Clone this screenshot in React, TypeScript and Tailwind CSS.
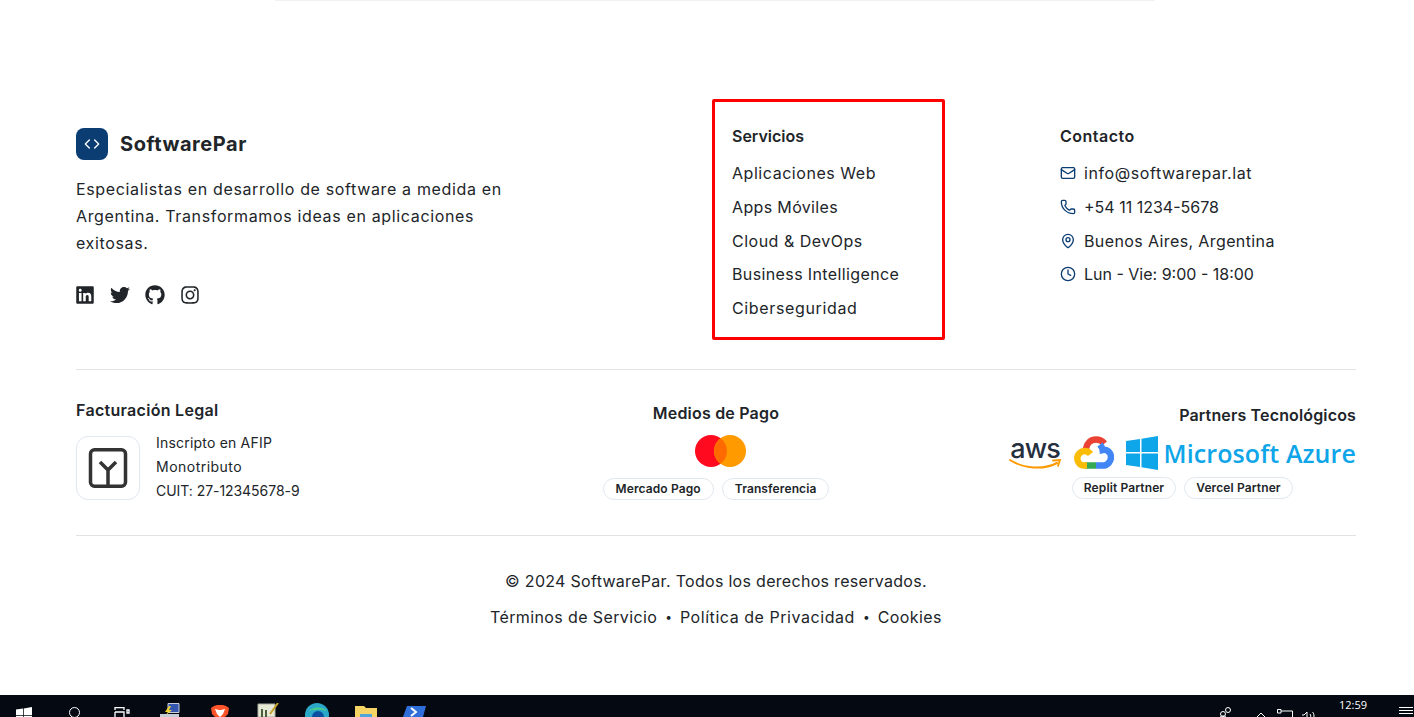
import { Clock, Code, Mail, MapPin, Phone } from "lucide-react";
import { FaGithub, FaInstagram, FaLinkedin, FaTwitter } from "react-icons/fa";

const services = [
  { label: "Aplicaciones Web", track: "tracking-[0.55px]" },
  { label: "Apps Móviles", track: "tracking-[0.35px]" },
  { label: "Cloud & DevOps", track: "tracking-[0.5px]" },
  { label: "Business Intelligence", track: "tracking-[0.38px]" },
  { label: "Ciberseguridad", track: "tracking-[0.64px]" },
];

const contact = [
  { icon: Mail, text: "info@softwarepar.lat", track: "tracking-[0.58px]" },
  { icon: Phone, text: "+54 11 1234-5678", track: "tracking-[0px]" },
  { icon: MapPin, text: "Buenos Aires, Argentina", track: "tracking-[0.39px]" },
  { icon: Clock, text: "Lun - Vie: 9:00 - 18:00", track: "tracking-[0px]" },
];

const Chip = ({ label, wide }: { label: string; wide?: boolean }) => (
  <span
    className={`h-[22px] flex items-center rounded-full border border-[#e2e8f0] text-[12px] font-semibold tracking-[0.01em] text-[#212529] ${
      wide ? "px-3" : "px-[11px]"
    }`}
  >
    {label}
  </span>
);

const WindowsLogo = ({ className, fill }: { className: string; fill: string }) => (
  <svg viewBox="0 0 32 34" className={className} fill={fill}>
    <path d="M0 5l14-2v13H0zM15.500 2.800L32 0v16H15.500zM0 17.500h14v13.500L0 29zM15.500 17.500H32V34l-16.500-2.700z" />
  </svg>
);

// cloud logo, four coloured segments
const GoogleCloud = () => (
  <svg viewBox="0 0 40 33" className="w-10 h-[33px]" fill="none" strokeWidth="6.500">
    <path d="M12 12.500C13 7 17 3.500 22 3.500c3.500 0 6.500 1.500 8.500 4" stroke="#ea4335" />
    <path d="M26 8.500c1.500 2 2.500 3.500 2.700 5.500 4-.8 8.300 2 8.300 7 0 4.500-3.500 8.500-8 8.500h-7" stroke="#4285f4" />
    <path d="M22 29.500H11" stroke="#34a853" />
    <path d="M13 29.500h-3C6 29.500 3.300 26 3.300 22.500 3.300 18 7 15 10.500 15c2.500 0 4.500 1 6 3" stroke="#fbbc05" />
  </svg>
);

const AwsLogo = () => (
  <div className="w-[53px] h-[34px] relative flex justify-center">
    <span className="text-[27px] leading-[25px] font-medium tracking-[-0.03em] text-[#252f3e]">aws</span>
    <svg viewBox="0 0 53 12" className="absolute left-0 bottom-0 w-[53px] h-3" fill="none">
      <path d="M1 2c14 9 34 10 47 3" stroke="#f90" strokeWidth="2" strokeLinecap="round" />
      <path d="M44 2.500l7-.5-2 6" stroke="#f90" strokeWidth="1.800" strokeLinecap="round" />
    </svg>
  </div>
);

const Taskbar = () => (
  <div className="h-[22px] shrink-0 bg-[#050a12] overflow-hidden flex items-start">
    <div className="flex">
      <div className="w-12 pt-3 flex justify-center">
        <WindowsLogo className="w-4 h-[17px]" fill="#ffffff" />
      </div>
      <div className="w-[52px] pt-3 flex justify-center">
        <div className="w-[11px] h-[11px] rounded-full border-[1.5px] border-white" />
      </div>
      <div className="w-11 pt-3 flex justify-center">
        <svg viewBox="0 0 16 12" className="w-4 h-3" fill="none" stroke="#fff" strokeWidth="1.300">
          <path d="M1 3V.7h9V3M1 5h9v7M1 5v7M13 3h2v3h-2z" />
        </svg>
      </div>
      <div className="w-[52px] pt-2 flex justify-center">
        <svg viewBox="0 0 20 14" className="w-5 h-[14px]">
          <path d="M8 .5h11v9H8z" fill="#3557b0" stroke="#c8d0e0" />
          <path d="M9 3L5 9h3l-3 4 7-6H9l2-4z" fill="#f2d22e" />
          <path d="M0 11h19v3H0z" fill="#c5ccd8" />
        </svg>
      </div>
      <div className="w-12 pt-[10px] flex justify-center">
        <svg viewBox="0 0 20 12" className="w-5 h-3">
          <path d="M4 1l3-1h6l3 1 3 2-1 6-3 3H5L2 9 1 3z" fill="#fb542b" />
          <path d="M5 4l4 1h2l4-1-2 5-3 3-3-3z" fill="#fff" />
        </svg>
      </div>
      <div className="w-12 pt-2 flex justify-center">
        <svg viewBox="0 0 22 14" className="w-[22px] h-[14px]">
          <path d="M1 1h17v13H1z" fill="#e8ead8" stroke="#a9ad98" />
          <path d="M5 6v8M9 7v7" stroke="#4b5f3a" strokeWidth="2" />
          <path d="M13 11L21 0" stroke="#c7a02c" strokeWidth="2" />
        </svg>
      </div>
      <div className="w-[50px] pt-2 flex justify-center">
        <svg viewBox="0 0 24 14" className="w-6 h-[14px]">
          <circle cx="12" cy="12" r="12" fill="#2aa7c9" />
          <circle cx="13" cy="14" r="6" fill="#0b4f9e" />
          <path d="M4 8c4-4 12-5 18 0-6-2-12-2-18 0z" fill="#4bd08a" />
        </svg>
      </div>
      <div className="w-12 pt-[11px] flex justify-center">
        <svg viewBox="0 0 22 11" className="w-[22px] h-[11px]">
          <path d="M0 0h9l2 2h11v9H0z" fill="#f6d365" />
          <path d="M5 8h12v3H5z" fill="#4ea5dc" />
        </svg>
      </div>
      <div className="w-12 pt-[11px] flex justify-center">
        <svg viewBox="0 0 23 11" className="w-[23px] h-[11px]">
          <path d="M4 0h19l-3 11H0z" fill="#2f6fdb" />
          <path d="M8 2l5 4-5 4" stroke="#fff" strokeWidth="2" fill="none" />
        </svg>
      </div>
    </div>
    <div className="ml-auto flex items-start">
      <svg viewBox="0 0 14 12" className="w-[14px] h-3 mt-3 mr-[22px]" fill="none" stroke="#fff">
        <circle cx="9" cy="3" r="2.500" />
        <circle cx="4" cy="7" r="2.500" />
        <path d="M0 12c0-2 2-3 4-3s4 1 4 3" />
      </svg>
      <svg viewBox="0 0 12 7" className="w-3 h-[7px] mt-[17px] mr-[10px]" fill="none" stroke="#fff">
        <path d="M.5 6.500L6 1l5.500 5.500" />
      </svg>
      <svg viewBox="0 0 16 12" className="w-4 h-3 mt-[14px] mr-2" fill="none" stroke="#fff">
        <path d="M4 4V.5H.5V4zM4 2h11.500v10" />
      </svg>
      <svg viewBox="0 0 15 12" className="w-[15px] h-3 mt-[14px] mr-[23px]" fill="none" stroke="#fff">
        <path d="M1 6h2l3-3v9M9 5c1 1 1 3 0 5M11.500 3c2 2 2 6 0 8" />
      </svg>
      <span className="text-[11px] leading-[14px] mt-[3px] mr-[32px] text-white font-['Open_Sans',sans-serif]">12:59</span>
      <div className="w-[14px] mt-[12px] mr-px flex flex-col gap-[2px]">
        <div className="h-px bg-white" />
        <div className="h-px bg-white" />
        <div className="h-px bg-white" />
      </div>
    </div>
  </div>
);

const App = () => {
  return (
    <div className="h-[717px] overflow-hidden flex flex-col bg-white font-['Inter',sans-serif] font-[430] text-[#212529]">
      <div className="flex-1 relative pl-[76px] pr-[58px]">
        {/* faint edge of the section above */}
        <div className="absolute top-0 left-[275px] w-[880px] h-px bg-[#f1f1f1]" />

        {/* main columns */}
        <div className="grid grid-cols-4 gap-8 pt-[124px] h-[370px] border-b border-[#e2e2e2]">
          <div className="col-span-2">
            <div className="flex items-center gap-3 mt-1">
              <div className="w-8 h-8 rounded-lg bg-[#0b3d73] flex items-center justify-center">
                <Code size={16} color="#ffffff" />
              </div>
              <span className="text-[20px] font-bold tracking-[0.55px]">SoftwarePar</span>
            </div>
            <p className="mt-4 w-[450px] text-[16px] leading-[27px] tracking-[0.65px]">
              Especialistas en desarrollo de software a medida en Argentina. Transformamos ideas en aplicaciones exitosas.
            </p>
            <div className="flex gap-[15px] mt-[28px] -ml-px">
              <FaLinkedin size={20} />
              <FaTwitter size={20} />
              <FaGithub size={20} />
              <FaInstagram size={20} />
            </div>
          </div>

          <div className="relative">
            {/* highlight drawn over the column */}
            <div className="absolute -left-5 -top-[25px] w-[233px] h-[241px] border-[3px] border-[#ff0000] rounded-[2px]" />
            <h4 className="text-[16px] leading-6 font-semibold">Servicios</h4>
            <ul className="mt-[13px] flex flex-col gap-[9.75px]">
              {services.map((service) => (
                <li key={service.label} className={`text-[16px] leading-6 ${service.track}`}>
                  {service.label}
                </li>
              ))}
            </ul>
          </div>

          <div>
            <h4 className="text-[16px] leading-6 font-semibold tracking-[0.5px]">Contacto</h4>
            <ul className="mt-[13px] flex flex-col gap-[9.75px]">
              {contact.map((item) => (
                <li key={item.text} className={`flex items-center gap-2 text-[16px] leading-6 ${item.track}`}>
                  <item.icon size={16} color="#0b3d73" />
                  {item.text}
                </li>
              ))}
            </ul>
          </div>
        </div>

        {/* billing, payment, partners */}
        <div className="grid grid-cols-3 gap-8 items-center pt-7 pb-8 border-b border-[#e2e2e2]">
          <div>
            <h5 className="text-[16px] leading-6 font-semibold tracking-[0.3px]">Facturación Legal</h5>
            <div className="flex items-center gap-4 mt-[9px]">
              <div className="w-16 h-16 mt-[2px] rounded-xl border border-[#e2e8f0] flex items-center justify-center">
                <svg viewBox="0 0 40 40" className="w-10 h-10" fill="none" stroke="#333333" strokeWidth="3.500">
                  <rect x="2.500" y="1.750" width="35" height="36.500" rx="4" />
                  <path d="M20 38V22M12 14l8 8 8-8" />
                </svg>
              </div>
              <div className="text-[14px] leading-6">
                <div className="tracking-[0.2px]">Inscripto en AFIP</div>
                <div className="tracking-[0.48px]">Monotributo</div>
                <div className="tracking-[-0.05px]">CUIT: 27-12345678-9</div>
              </div>
            </div>
          </div>

          <div className="flex flex-col items-center">
            <h5 className="text-[16px] leading-6 font-semibold tracking-[0.2px]">Medios de Pago</h5>
            <svg viewBox="0 0 51 32" className="w-[51px] h-8 mt-[10px] ml-[9px]">
              <circle cx="16" cy="16" r="16" fill="#ff0a1e" />
              <circle cx="35" cy="16" r="16" fill="#ff9a00" />
              <path d="M25.500 3.130a16 16 0 0 1 0 25.740a16 16 0 0 1 0-25.740z" fill="#ff6a00" />
            </svg>
            <div className="flex gap-2 mt-[11px]">
              <Chip label="Mercado Pago" wide />
              <Chip label="Transferencia" wide />
            </div>
          </div>

          <div className="flex flex-col items-end">
            <h5 className="text-[16px] leading-6 font-semibold tracking-[0.15px]">Partners Tecnológicos</h5>
            <div className="flex flex-col items-center mt-[9px]">
              <div className="flex items-center gap-3 h-[34px]">
                <AwsLogo />
                <GoogleCloud />
                <div className="flex items-center gap-[6px]">
                  <WindowsLogo className="w-8 h-[34px]" fill="#0ea5e9" />
                  <span className="text-[25px] leading-[34px] font-[550] tracking-[0.1px] text-[#0ea5e9] font-['Open_Sans',sans-serif]">Microsoft Azure</span>
                </div>
              </div>
              <div className="flex gap-2 mt-[7px]">
                <Chip label="Replit Partner" />
                <Chip label="Vercel Partner" />
              </div>
            </div>
          </div>
        </div>

        {/* legal */}
        <div className="flex flex-col items-center pt-[33px] text-[16px] leading-6">
          <p className="tracking-[0.3px]">© 2024 SoftwarePar. Todos los derechos reservados.</p>
          <div className="flex items-center gap-2 mt-3">
            <span className="tracking-[0.38px]">Términos de Servicio</span>
            <span className="text-[12px]">•</span>
            <span className="tracking-[0.55px]">Política de Privacidad</span>
            <span className="text-[12px]">•</span>
            <span className="tracking-[0.43px]">Cookies</span>
          </div>
        </div>
      </div>
      <Taskbar />
    </div>
  );
};

export default App;
